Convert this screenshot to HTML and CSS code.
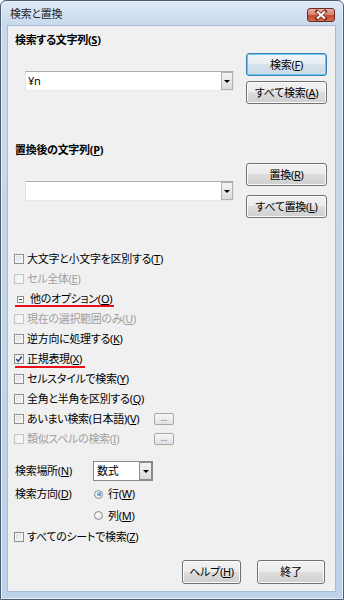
FILE: index.html
```html
<!DOCTYPE html>
<html lang="ja">
<head>
    <meta charset="UTF-8">
    <meta name="viewport" content="width=device-width, initial-scale=1.0">
    <title>検索と置換</title>
    <link rel="stylesheet" href="styles.css">
</head>
<body>

    <div class="window">
        <div class="titlebar">
            <span class="title">検索と置換</span>
            <span class="close">
                <svg width="26" height="12" viewBox="0 0 26 12">
                    <path d="M9 2.5 L17 9.5 M17 2.5 L9 9.5" stroke="#7a2c22" stroke-width="3.6" stroke-linecap="square"/>
                    <path d="M9 2.5 L17 9.5 M17 2.5 L9 9.5" stroke="#ffffff" stroke-width="2"/>
                </svg>
            </span>
        </div>

        <div class="client">
            <section class="group">
                <h2 class="group-title">検索する文字列(<u>S</u>)</h2>
                <div class="group-row">
                    <div class="combo"><span class="combo-text">¥n</span><span class="drop"><i></i></span></div>
                    <div class="btn-col">
                        <span class="btn btn-default">検索(<u>F</u>)</span>
                        <span class="btn">すべて検索(<u>A</u>)</span>
                    </div>
                </div>
            </section>

            <section class="group group-replace">
                <h2 class="group-title">置換後の文字列(<u>P</u>)</h2>
                <div class="group-row">
                    <div class="combo"><span class="combo-text"></span><span class="drop"><i></i></span></div>
                    <div class="btn-col">
                        <span class="btn">置換(<u>R</u>)</span>
                        <span class="btn">すべて置換(<u>L</u>)</span>
                    </div>
                </div>
            </section>

            <ul class="options">
                <li class="opt"><span class="box"></span>大文字と小文字を区別する(<u>T</u>)</li>
                <li class="opt disabled"><span class="box"></span>セル全体(<u>E</u>)</li>
                <li class="opt expander marked mark-1"><span class="minus"></span>他のオプション(<u>O</u>)</li>
                <li class="opt disabled"><span class="box"></span>現在の選択範囲のみ(<u>U</u>)</li>
                <li class="opt"><span class="box"></span>逆方向に処理する(<u>K</u>)</li>
                <li class="opt marked mark-2">
                    <span class="box checked">
                        <svg width="8" height="8" viewBox="0 0 8 8"><path d="M1.2 4 L3.2 6.2 L6.8 1.4" fill="none" stroke="#2f4a8c" stroke-width="1.6"/></svg>
                    </span>正規表現(<u>X</u>)
                </li>
                <li class="opt"><span class="box"></span>セルスタイルで検索(<u>Y</u>)</li>
                <li class="opt"><span class="box"></span>全角と半角を区別する(<u>Q</u>)</li>
                <li class="opt opt-more">
                    <span class="opt-label"><span class="box"></span>あいまい検索(日本語)(<u>V</u>)</span>
                    <span class="more">...</span>
                </li>
                <li class="opt opt-more disabled">
                    <span class="opt-label"><span class="box"></span>類似スペルの検索(<u>I</u>)</span>
                    <span class="more">...</span>
                </li>
            </ul>

            <div class="settings">
                <span class="set-label">検索場所(<u>N</u>)</span>
                <div class="select"><span class="select-text">数式</span><span class="drop drop-dark"><i></i></span></div>

                <span class="set-label">検索方向(<u>D</u>)</span>
                <span class="radio-row"><span class="radio checked"></span>行(<u>W</u>)</span>
                <span></span>
                <span class="radio-row"><span class="radio"></span>列(<u>M</u>)</span>
            </div>

            <div class="opt opt-all"><span class="box"></span>すべてのシートで検索(<u>Z</u>)</div>

            <div class="footer">
                <span class="btn btn-help">ヘルプ(<u>H</u>)</span>
                <span class="btn btn-close">終了</span>
            </div>
        </div>
    </div>

</body>
</html>
```

FILE: styles.css
```css
body {
    margin: 0;
    font-family: "Noto Sans", "Noto Sans CJK JP", sans-serif;
    font-size: 11px;
    letter-spacing: -0.3px;
    font-feature-settings: "palt";
    color: #000;
}
u {
    text-decoration-thickness: 1px;
    text-underline-offset: 1px;
}
.window {
    width: 344px;
    height: 600px;
    box-sizing: border-box;
    border: 1px solid #4f5e6e;
    border-radius: 6px 6px 0 0;
    background: linear-gradient(180deg, #dfe9f5 0, #c8daee 24px, #bcd2ea 100%);
    display: flex;
    flex-direction: column;
    box-shadow: inset 0 0 0 1px #e6eef8;
}
.titlebar {
    height: 24px;
    display: flex;
    align-items: flex-start;
    padding: 0 8px 0 9px;
}
.title {
    margin-top: 5px;
    line-height: 16px;
    color: #1e1e1e;
}
.close {
    margin-left: auto;
    margin-top: 7px;
    width: 28px;
    height: 14px;
    box-sizing: border-box;
    border: 1px solid #6b2a22;
    border-radius: 3px;
    background: linear-gradient(180deg, #eab0a2 0, #d98471 45%, #c54a33 55%, #d36c52 100%);
    display: flex;
    align-items: center;
    justify-content: center;
}
.client {
    flex: 1;
    margin: 0 7px 7px 6px;
    border: 1px solid #a9bcd2;
    background-color: #f0f0f0;
    padding: 6px 8px 0 7px;
}

/* find / replace groups */
.group-title {
    margin: 0;
    font-size: 11px;
    font-weight: bold;
    line-height: 16px;
}
.group-row {
    display: flex;
    margin-top: 5px;
}
.group-replace {
    margin-top: 38px;
}
.group-replace .btn-col {
    gap: 9px;
}
.combo {
    margin: 18px 0 0 10px;
    width: 209px;
    height: 20px;
    box-sizing: border-box;
    border: 1px solid #abadb3;
    border-color: #abadb3 #e3e9ef #e3e9ef #e2e3ea;
    background: #fff;
    display: flex;
}
.combo-text {
    flex: 1;
    padding-left: 2px;
    line-height: 18px;
}
.drop {
    width: 12px;
    box-sizing: border-box;
    border: 1px solid #b0b0b0;
    background: linear-gradient(180deg, #f4f4f4, #dcdcdc);
    display: flex;
    align-items: center;
    justify-content: center;
}
.drop i {
    width: 0;
    height: 0;
    border-left: 3px solid transparent;
    border-right: 3px solid transparent;
    border-top: 3px solid #000;
}
.btn-col {
    margin-left: auto;
    display: flex;
    flex-direction: column;
    gap: 5px;
    width: 81px;
}
.btn {
    height: 23px;
    box-sizing: border-box;
    border: 1px solid #707070;
    border-radius: 3px;
    background: linear-gradient(180deg, #f2f2f2 0, #ebebeb 49%, #dddddd 50%, #cfcfcf 100%);
    box-shadow: inset 0 0 0 1px #fcfcfc;
    display: flex;
    align-items: center;
    justify-content: center;
    line-height: 16px;
}
.btn-default {
    border-color: #3c7fb1;
    box-shadow: inset 0 0 0 1px #67c6f3;
    background: linear-gradient(180deg, #f0f5f9 0, #e6eef4 49%, #d6e3ec 50%, #c9d9e4 100%);
}

/* check options */
.options {
    list-style: none;
    margin: 31px 0 0 -1px;
    padding: 0;
}
.opt {
    height: 20px;
    display: flex;
    align-items: center;
    line-height: 16px;
    position: relative;
}
.box {
    width: 10px;
    height: 10px;
    box-sizing: border-box;
    border: 1px solid #8e8f8f;
    background: linear-gradient(135deg, #dcdcdc, #fbfbfb);
    box-shadow: inset 0 0 0 1px #f4f4f4;
    margin-right: 3px;
    display: flex;
    align-items: center;
    justify-content: center;
}
.box.checked {
    background: #f4f4f4;
}
.disabled {
    color: #a0a0a0;
}
.disabled .box {
    border-color: #c4c4c4;
    background: #f4f4f4;
}
.minus {
    width: 7px;
    height: 7px;
    box-sizing: border-box;
    border: 1px solid #8e8e8e;
    background: #fff;
    margin: 0 6px 0 3px;
    position: relative;
}
.minus::after {
    content: "";
    position: absolute;
    left: 1px;
    top: 2px;
    width: 3px;
    height: 1px;
    background: #333;
}
.marked::after {
    content: "";
    position: absolute;
    left: 1px;
    height: 2px;
    background: #e8101a;
}
.mark-1::after {
    top: 16px;
    width: 99px;
}
.mark-2::after {
    top: 17px;
    width: 70px;
}
.opt-more {
    display: grid;
    grid-template-columns: 140px 20px;
}
.opt-label {
    display: flex;
    align-items: center;
}
.more {
    height: 12px;
    box-sizing: border-box;
    border: 1px solid #a8a8a8;
    border-radius: 2px;
    background: linear-gradient(180deg, #f6f6f6, #e2e2e2);
    color: #6a6a6a;
    font-size: 9px;
    line-height: 7px;
    text-align: center;
}

/* search place / direction */
.settings {
    display: grid;
    grid-template-columns: 78px auto;
    grid-template-rows: 20px 20px 20px;
    row-gap: 3px;
    margin-top: 12px;
    align-items: center;
}
.settings .radio-row:last-child {
    margin-top: -3px;
}
.set-label {
    line-height: 16px;
}
.select {
    width: 60px;
    height: 20px;
    box-sizing: border-box;
    border: 1px solid #8a8a8a;
    background: #fff;
    display: flex;
}
.select-text {
    flex: 1;
    padding-left: 3px;
    line-height: 18px;
}
.drop-dark {
    width: 13px;
    border-color: #8a8a8a;
}
.radio-row {
    display: flex;
    align-items: center;
    line-height: 16px;
}
.radio {
    width: 9px;
    height: 9px;
    box-sizing: border-box;
    border: 1px solid #8e8f8f;
    border-radius: 50%;
    background: radial-gradient(circle at 40% 40%, #ffffff, #d8d8d8);
    margin: 0 5px 0 1px;
    position: relative;
}
.radio.checked::after {
    content: "";
    position: absolute;
    left: 1.5px;
    top: 1.5px;
    width: 4px;
    height: 4px;
    border-radius: 50%;
    background: radial-gradient(circle at 35% 35%, #8fd2ff, #1c5fb0);
}
.opt-all {
    margin-left: -1px;
}

.footer {
    display: flex;
    justify-content: flex-end;
    gap: 16px;
    margin-top: 13px;
    padding-right: 2px;
}
.btn-help {
    width: 59px;
    height: 24px;
}
.btn-close {
    width: 68px;
    height: 24px;
}
```
